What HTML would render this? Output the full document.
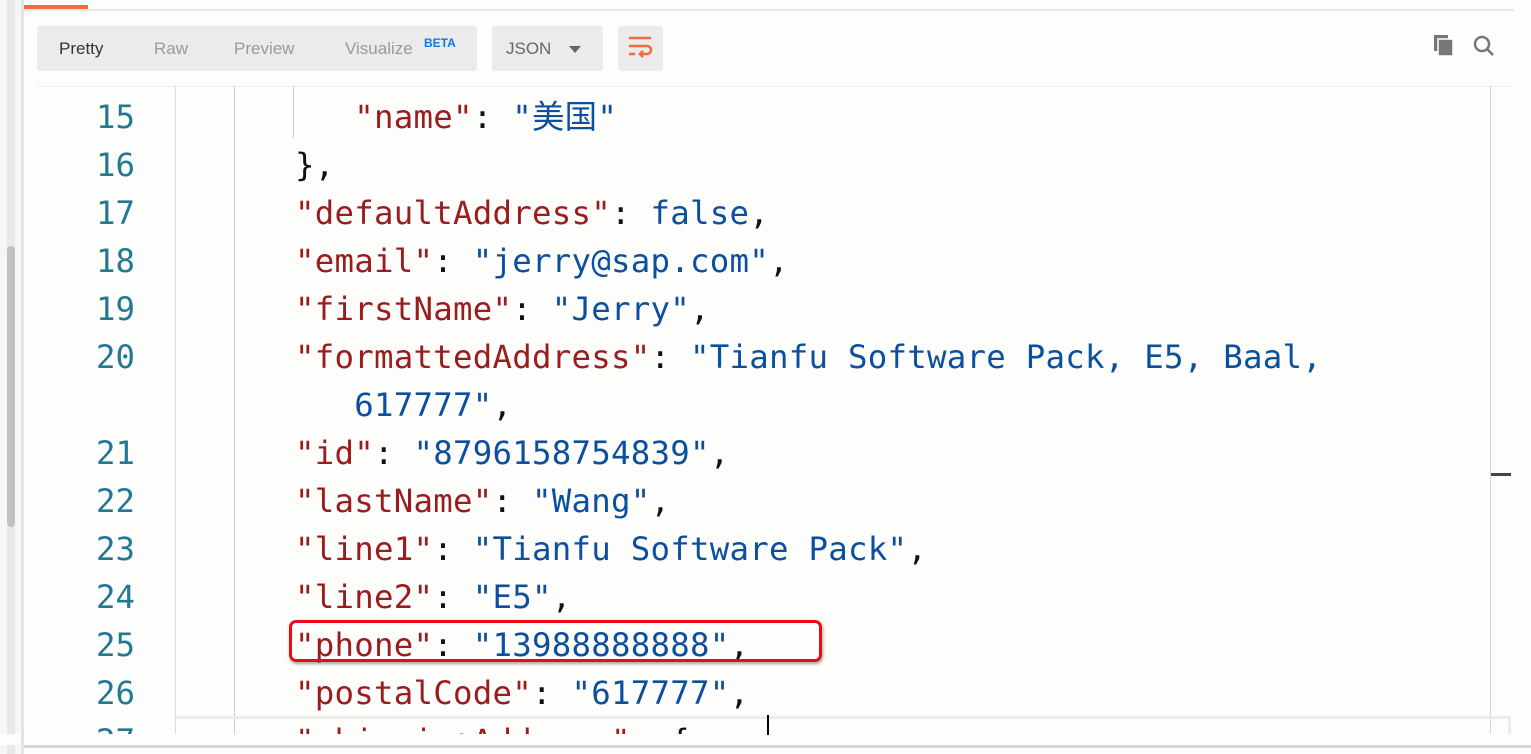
<!DOCTYPE html>
<html><head><meta charset="utf-8"><style>
*{margin:0;padding:0;box-sizing:border-box}
body{width:1531px;height:754px;background:#fdfdfc;position:relative;overflow:hidden;font-family:"Liberation Sans",sans-serif}
.a{position:absolute}
.code{font-family:"DejaVu Sans Mono","Liberation Mono","Noto Sans CJK SC",monospace;font-size:32.4px;white-space:pre;line-height:48px;letter-spacing:0.25px}
.k{color:#9b1c1c}.s{color:#0b4f9e}.p{color:#111}
.n{color:#237893;text-align:right;width:135px;left:0;letter-spacing:0}
</style></head><body>
<div class="a" style="left:0;top:0;width:22px;height:754px;background:#f6f6f6"></div>
<div class="a" style="left:7px;top:0;width:8px;height:754px;background:#e9e9e9"></div>
<div class="a" style="left:7px;top:246px;width:8px;height:281px;background:#c0c0c0;border-radius:4px"></div>
<div class="a" style="left:21px;top:0;width:3px;height:754px;background:#e3e3e3"></div>
<div class="a" style="left:24px;top:9px;width:1490px;height:2px;background:#e6e6e6"></div>
<div class="a" style="left:24px;top:5px;width:64px;height:4px;background:#f26b3a"></div>
<div class="a" style="left:24px;top:745px;width:1507px;height:3px;background:#d8d8d8"></div>
<div class="a" style="left:37px;top:26px;width:440px;height:45px;background:#ebebeb;border-radius:3px"></div>
<div class="a" style="left:59px;top:39px;font-size:17px;color:#333">Pretty</div>
<div class="a" style="left:154px;top:39px;font-size:17px;color:#999">Raw</div>
<div class="a" style="left:234px;top:39px;font-size:17px;color:#999">Preview</div>
<div class="a" style="left:345px;top:39px;font-size:17px;color:#999">Visualize</div>
<div class="a" style="left:424px;top:36px;font-size:12px;font-weight:bold;color:#097bed">BETA</div>
<div class="a" style="left:492px;top:26px;width:111px;height:45px;background:#ebebeb;border-radius:3px"></div>
<div class="a" style="left:506px;top:39px;font-size:17px;color:#666">JSON</div>
<div class="a" style="left:569px;top:46px;width:0;height:0;border-left:6px solid transparent;border-right:6px solid transparent;border-top:7px solid #666"></div>
<div class="a" style="left:618px;top:26px;width:45px;height:45px;background:#ebebeb;border-radius:3px"></div>
<svg class="a" style="left:627px;top:35px" width="28" height="28" viewBox="0 0 28 28"><g stroke="#f26b3a" stroke-width="2.5" fill="none"><path d="M2 3H24M2 11H20a4 4 0 0 1 0 8H13M2 19H8"/><path d="M16 16l-3 3 3 3"/></g></svg>
<svg class="a" style="left:1433px;top:34px" width="24" height="24" viewBox="0 0 24 24"><rect x="1" y="1" width="14" height="16" fill="#777"/><rect x="5" y="5" width="15" height="17" fill="#777" stroke="#fff" stroke-width="1.5"/></svg>
<svg class="a" style="left:1472px;top:34px" width="24" height="24" viewBox="0 0 24 24"><circle cx="10" cy="10" r="7" stroke="#777" stroke-width="2.5" fill="none"/><path d="M15 15l6 6" stroke="#777" stroke-width="2.5"/></svg>
<div class="a" style="left:37px;top:86px;width:1474px;height:1px;background:#eee"></div>
<div class="a" style="left:175px;top:86px;width:1px;height:648px;background:#ddd"></div>
<div class="a" style="left:234px;top:86px;width:1px;height:648px;background:#ccc"></div>
<div class="a" style="left:293px;top:86px;width:1px;height:52px;background:#ccc"></div>
<div class="a" style="left:1490px;top:86px;width:1px;height:648px;background:#d6d6d6"></div>
<div class="a" style="left:1491px;top:473px;width:20px;height:3px;background:#444"></div>
<div class="a" style="left:0;top:93px;width:1531px;height:641px;overflow:hidden">
<div class="a code n" style="top:0">15
16
17
18
19
20

21
22
23
24
25
26
27</div>
<div class="a code" style="left:295px;top:0"><span class="k">   "name"</span><span class="p">: </span><span class="s">"美国"</span>
<span class="p">},</span>
<span class="k">"defaultAddress"</span><span class="p">: </span><span class="s">false</span><span class="p">,</span>
<span class="k">"email"</span><span class="p">: </span><span class="s">"jerry@sap.com"</span><span class="p">,</span>
<span class="k">"firstName"</span><span class="p">: </span><span class="s">"Jerry"</span><span class="p">,</span>
<span class="k">"formattedAddress"</span><span class="p">: </span><span class="s">"Tianfu Software Pack, E5, Baal,</span>
<span class="s">   617777"</span><span class="p">,</span>
<span class="k">"id"</span><span class="p">: </span><span class="s">"8796158754839"</span><span class="p">,</span>
<span class="k">"lastName"</span><span class="p">: </span><span class="s">"Wang"</span><span class="p">,</span>
<span class="k">"line1"</span><span class="p">: </span><span class="s">"Tianfu Software Pack"</span><span class="p">,</span>
<span class="k">"line2"</span><span class="p">: </span><span class="s">"E5"</span><span class="p">,</span>
<span class="k">"phone"</span><span class="p">: </span><span class="s">"13988888888"</span><span class="p">,</span>
<span class="k">"postalCode"</span><span class="p">: </span><span class="s">"617777"</span><span class="p">,</span>
<span class="k">"shippingAddress"</span><span class="p">: {</span></div>
</div>
<div class="a" style="left:176px;top:716px;width:1335px;height:3px;background:#ececec"></div>
<div class="a" style="left:1508px;top:716px;width:3px;height:18px;background:#ececec"></div>
<div class="a" style="left:0;top:734px;width:1531px;height:11px;background:#fdfdfc"></div>
<div class="a" style="left:21px;top:734px;width:3px;height:20px;background:#e3e3e3"></div>
<div class="a" style="left:767px;top:715px;width:2px;height:20px;background:#000"></div>
<div class="a" style="left:289px;top:620px;width:533px;height:42px;border:3.5px solid #ee0a14;border-radius:7px;box-shadow:1px 2px 3px rgba(0,0,0,.35)"></div>
</body></html>
